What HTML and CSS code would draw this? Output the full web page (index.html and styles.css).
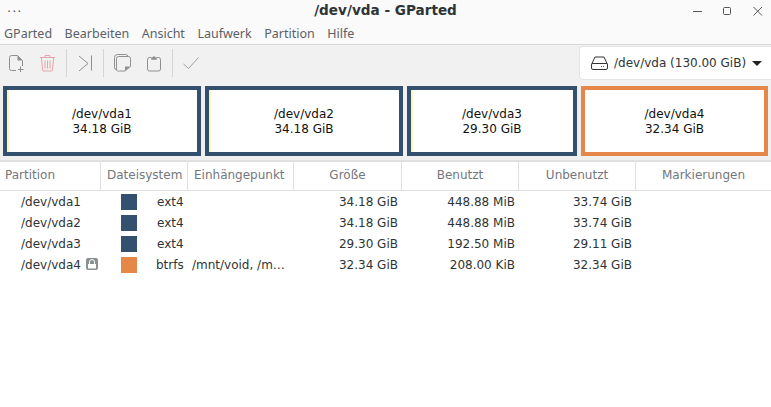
FILE: index.html
```html
<!DOCTYPE html>
<html lang="de">
  <head>
    <meta charset="utf-8">
    <title>/dev/vda - GParted</title>
    <link rel="stylesheet" href="styles.css">
  </head>

  <body>
    <div class="window">
      <div class="titlebar">
        <span class="titleDots">···</span>
        <span class="titleText">/dev/vda - GParted</span>
        <div class="winButtons">
          <svg width="12" height="12" viewBox="0 0 12 12"><path d="M1 6.500h9" stroke="#555" fill="none"/></svg>
          <svg width="12" height="12" viewBox="0 0 12 12"><rect x="1.500" y="2.500" width="7" height="7" rx="1" stroke="#555" fill="none"/></svg>
          <svg width="12" height="12" viewBox="0 0 12 12"><path d="M1.500 2l8.500 8.500M10 2l-8.500 8.500" stroke="#555" fill="none"/></svg>
        </div>
      </div>

      <div class="menubar">
        <span>GParted</span>
        <span>Bearbeiten</span>
        <span>Ansicht</span>
        <span>Laufwerk</span>
        <span>Partition</span>
        <span>Hilfe</span>
      </div>

      <div class="toolbar">
        <svg width="15" height="18" viewBox="0 0 15 18"><path d="M7 16.500H2.500a2 2 0 0 1-2-2v-11a2 2 0 0 1 2-2h6l5 5v5.500" stroke="#8f8f8f" fill="none"/><path d="M8.500 1.500v5h5z" fill="#8f8f8f"/><path d="M9 15.500h5.500M11.500 12.500v5.500" stroke="#8f8f8f" fill="none"/></svg>
        <svg class="toolFar" width="15" height="18" viewBox="0 0 15 18"><path d="M0 3.500h15M5 3.500V1.500h5v2M1.500 4l1 12a1 1 0 0 0 1 1h8a1 1 0 0 0 1-1l1-12M5 6.500v8M7.500 6.500v8M10 6.500v8" stroke="#e8a3a8" fill="none"/></svg>
        <i class="sep"></i>
        <svg width="14" height="18" viewBox="0 0 14 18"><path d="M1 2l9 7.500-9 7.500M13.500 1.500v15" stroke="#8f8f8f" fill="none"/></svg>
        <i class="sep"></i>
        <svg class="toolNear" width="17" height="18" viewBox="0 0 17 18"><path d="M2.500 15.500a2 2 0 0 1-2-2v-10a3 3 0 0 1 3-3h8a2.500 2.500 0 0 1 2.500 2" stroke="#8f8f8f" fill="none"/><path d="M11 17H5.500a2 2 0 0 1-3-2V4.500a2 2 0 0 1 2-2h10a2 2 0 0 1 2 2V12.500z" stroke="#8f8f8f" fill="none"/><path d="M11 17v-4.500h5z" fill="#8f8f8f"/></svg>
        <svg class="toolFar" width="14" height="18" viewBox="0 0 14 18"><path d="M4 3.500H2.500a2 2 0 0 0-2 2v9.500a2 2 0 0 0 2 2h9a2 2 0 0 0 2-2V5.500a2 2 0 0 0-2-2H10" stroke="#8f8f8f" fill="none"/><path d="M4.500 5.500V3.500H6a1 1 0 1 1 2 0h1.500v2z" stroke="#8f8f8f" fill="#8f8f8f" stroke-width=".5"/></svg>
        <i class="sep"></i>
        <svg class="toolNear" width="16" height="18" viewBox="0 0 16 18"><path d="M.5 10l5 4.500L15.500 3.500" stroke="#a0a0a0" fill="none"/></svg>
        <div class="devicePicker">
          <svg width="17" height="14" viewBox="0 0 17 14"><path d="M.5 8.500L4 1h9l3.500 7.500M.5 8.500V12a1.500 1.500 0 0 0 1.500 1.500h13a1.500 1.500 0 0 0 1.500-1.500V8.500a1.500 1.500 0 0 0-1.500-1H2a1.500 1.500 0 0 0-1.500 1z" stroke="#333" fill="none"/><path d="M10 10.500h4" stroke="#555" stroke-dasharray="1 1" fill="none"/></svg>
          <span>/dev/vda (130.00 GiB)</span>
          <i class="caret"></i>
        </div>
      </div>

      <div class="partMap">
        <div class="partBox ext4 w198"><span class="used"></span><p>/dev/vda1<br>34.18 GiB</p></div>
        <div class="partBox ext4 w198"><span class="used"></span><p>/dev/vda2<br>34.18 GiB</p></div>
        <div class="partBox ext4 w170"><span class="used"></span><p>/dev/vda3<br>29.30 GiB</p></div>
        <div class="partBox btrfs w187"><p>/dev/vda4<br>32.34 GiB</p></div>
      </div>

      <table class="partTable">
        <colgroup>
          <col class="colName">
          <col class="colSwatch">
          <col class="colFs">
          <col class="colMount">
          <col class="colSize">
          <col class="colUsed">
          <col class="colFree">
          <col>
        </colgroup>
        <thead>
          <tr>
            <th>Partition</th>
            <th colspan="2">Dateisystem</th>
            <th>Einhängepunkt</th>
            <th class="center">Größe</th>
            <th class="center">Benutzt</th>
            <th class="center">Unbenutzt</th>
            <th class="center">Markierungen</th>
          </tr>
        </thead>
        <tbody>
          <tr>
            <td class="name">/dev/vda1</td>
            <td class="swatchCell"><i class="swatch ext4Fill"></i></td>
            <td class="fs">ext4</td><td></td>
            <td class="num">34.18 GiB</td><td class="num">448.88 MiB</td><td class="num">33.74 GiB</td><td></td>
          </tr>
          <tr>
            <td class="name">/dev/vda2</td>
            <td class="swatchCell"><i class="swatch ext4Fill"></i></td>
            <td class="fs">ext4</td><td></td>
            <td class="num">34.18 GiB</td><td class="num">448.88 MiB</td><td class="num">33.74 GiB</td><td></td>
          </tr>
          <tr>
            <td class="name">/dev/vda3</td>
            <td class="swatchCell"><i class="swatch ext4Fill"></i></td>
            <td class="fs">ext4</td><td></td>
            <td class="num">29.30 GiB</td><td class="num">192.50 MiB</td><td class="num">29.11 GiB</td><td></td>
          </tr>
          <tr>
            <td class="name">/dev/vda4
              <svg class="lock" width="12" height="12" viewBox="0 0 12 12"><rect width="12" height="12" rx="2" fill="#8a8f90"/><path d="M3.500 6V4a2.500 2.500 0 0 1 5 0v2" stroke="#fff" fill="none"/><rect x="2" y="6" width="8" height="4.500" fill="#fff"/></svg>
            </td>
            <td class="swatchCell"><i class="swatch btrfsFill"></i></td>
            <td class="fs btrfsName">btrfs</td><td class="mount">/mnt/void, /m…</td>
            <td class="num">32.34 GiB</td><td class="num">208.00 KiB</td><td class="num">32.34 GiB</td><td></td>
          </tr>
        </tbody>
      </table>
    </div>
  </body>
</html>
```

FILE: styles.css
```css
html, body {
  margin: 0;
  background-color: #fff;
}

.window {
  width: 771px;
  height: 407px;
  overflow: hidden;
  font-family: "DejaVu Sans", sans-serif;
  font-size: 12px;
  color: #2e3436;
}

.titlebar {
  height: 22px;
  display: grid;
  grid-template-columns: 1fr auto 1fr;
  align-items: center;
  padding: 0 7px;
  background-color: #fafafa;
}

.titleDots {
  font-size: 13px;
  color: #555;
  letter-spacing: 1px;
}

.titleText {
  padding-bottom: 3px;
  font-size: 13.6px;
  font-weight: bold;
  color: #2e3436;
}

.winButtons {
  display: flex;
  justify-content: flex-end;
  gap: 18px;
}

.menubar {
  height: 22px;
  display: flex;
  align-items: center;
  gap: 12.5px;
  padding: 0 4px;
  background-color: #fafafa;
  border-bottom: 1px solid #d8d8d8;
  font-family: "Noto Sans", sans-serif;
  font-size: 12.5px;
  color: #5a5f66;
}

.toolbar {
  height: 40px;
  box-sizing: border-box;
  display: flex;
  align-items: center;
  gap: 11px;
  padding: 0 0 4px 9px;
  background-color: #f1f1f1;
}

.toolFar { margin-left: 5px; }
.toolNear { margin-left: -1px; }

.sep {
  width: 1px;
  height: 28px;
  background-color: #d4d4d4;
}

.devicePicker {
  margin-left: auto;
  width: 192px;
  height: 34px;
  box-sizing: border-box;
  display: flex;
  align-items: center;
  gap: 6px;
  padding-left: 11px;
  background-color: #fff;
  border: 1px solid #e4e4e4;
  border-right: 0;
  border-radius: 4px 0 0 4px;
}

.caret {
  margin-left: 0;
  border-left: 5px solid transparent;
  border-right: 5px solid transparent;
  border-top: 5px solid #222;
}

.partMap {
  height: 77px;
  box-sizing: border-box;
  display: flex;
  gap: 4px;
  padding: 1px 3px 4px;
  background-color: #f0f0f0;
  border-bottom: 2px solid #e0e0e0;
}

.partBox {
  position: relative;
  box-sizing: border-box;
  height: 70px;
  display: flex;
  align-items: center;
  justify-content: center;
  background-color: #fff;
  color: #111;
  text-align: center;
}

.partBox p {
  margin: 0;
  padding-top: 2px;
  line-height: 15px;
}

.ext4 { border: 4px solid #33506f; }
.btrfs { border: 4px solid #e58749; }
.w198 { width: 198px; }
.w170 { width: 170px; }
.w187 { width: 187px; }

.used {
  position: absolute;
  left: 0;
  top: 0;
  bottom: 0;
  width: 2px;
  background-color: #f6f6c0;
}

.partTable {
  width: 771px;
  border-collapse: separate;
  border-spacing: 0;
  table-layout: fixed;
}

.colName { width: 101px; }
.colSwatch { width: 50px; }
.colFs { width: 37px; }
.colMount { width: 106px; }
.colSize { width: 108px; }
.colUsed { width: 117px; }
.colFree { width: 117px; }

.partTable th {
  height: 29px;
  box-sizing: border-box;
  padding: 0 6px 2px;
  text-align: left;
  font-weight: normal;
  color: #72777d;
  border-right: 1px solid #e0e0e0;
  border-bottom: 1px solid #e0e0e0;
  white-space: nowrap;
}

.partTable th:first-child {
  padding-left: 5px;
}

.partTable th:last-child {
  border-right: 0;
}

.partTable th.center {
  text-align: center;
}

.partTable td {
  height: 21px;
  padding: 0;
  white-space: nowrap;
}

.partTable td.name {
  padding-left: 21px;
}

.partTable td.swatchCell {
  padding-left: 20px;
}

.partTable td.fs {
  padding-left: 6px;
}

.partTable td.btrfsName {
  padding-left: 5px;
}

.partTable td.mount {
  padding-left: 4px;
}

.partTable td.num {
  text-align: right;
  padding-right: 4px;
}

.swatch {
  display: block;
  width: 16px;
  height: 16px;
}

.ext4Fill { background-color: #33506f; }
.btrfsFill { background-color: #e58749; }

.lock {
  vertical-align: -1px;
  margin-left: 1px;
}
```
